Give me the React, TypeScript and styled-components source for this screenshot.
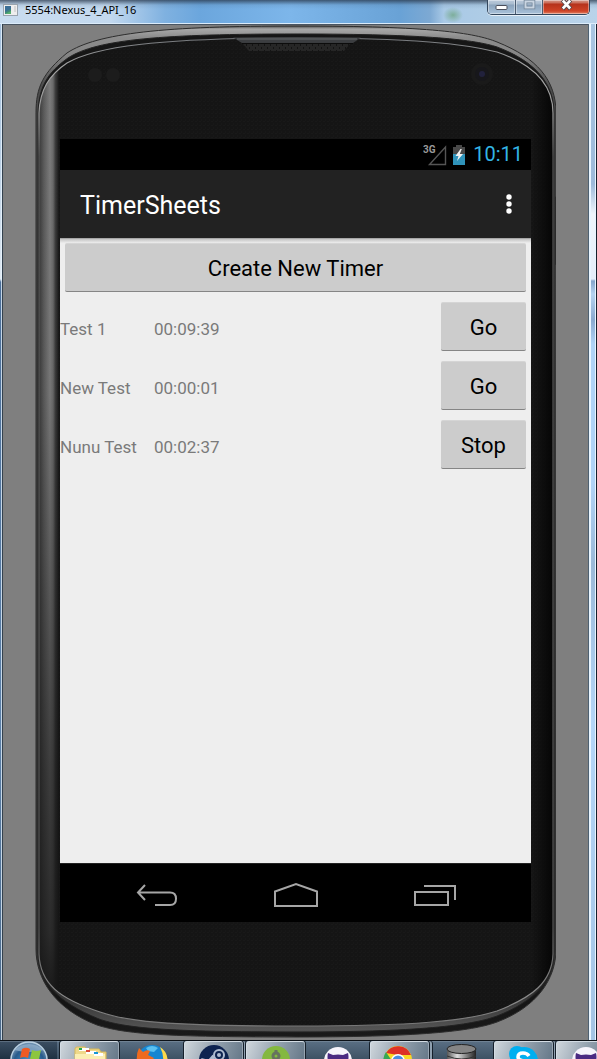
import React from "react";
import styled, { createGlobalStyle, css } from "styled-components";

const GlobalStyle = createGlobalStyle`
  *, *::before, *::after { box-sizing: border-box; }
  body { margin: 0; background: #7f7f7f; font-family: Roboto, "Noto Sans", sans-serif; }
  button { font: inherit; color: inherit; border: 0; padding: 0; margin: 0; cursor: pointer; }
`;

const Desktop = styled.div`
  display: flex;
  flex-direction: column;
  min-height: 100vh;
`;

const EmulatorWindow = styled.section`
  flex: 1;
  display: flex;
  flex-direction: column;
  background: #7f7f7f;
`;

const TitleBar = styled.header`
  display: flex;
  align-items: flex-start;
  height: 24px;
  padding: 0 7px 0 3px;
  border-bottom: 1px solid #dcecfa;
  background:
    linear-gradient(rgba(40, 55, 75, 0.75), rgba(60, 90, 120, 0.12) 5px, transparent 9px),
    radial-gradient(ellipse 10px 8px at 453px 15px, rgba(110, 165, 130, 0.75), transparent),
    linear-gradient(90deg, #c9dcef 0, #c3d9ef 110px, #7fb1e0 165px, #6ba6dd 200px, #7db6ea 290px, #69a2d6 400px, #7da9d3 430px, #a9c9e6 444px, #b3cfe6 520px, #b9d3ea 100%);
`;

const WindowIcon = styled.svg`
  width: 15px;
  height: 12px;
  margin-top: 4px;
`;

const WindowTitle = styled.h1`
  flex: 1;
  margin: 0 0 0 7px;
  color: #000;
  font: 400 11px/19px "Noto Sans", "Open Sans", sans-serif;
`;

const WindowControls = styled.div`
  display: flex;
  height: 15px;
  border: 1px solid #33465c;
  border-top: 0;
  border-radius: 0 0 5px 5px;
  overflow: hidden;
  box-shadow: 0 1px 0 rgba(255, 255, 255, 0.7);
`;

const WindowButton = styled.button<{ $close?: boolean }>`
  display: flex;
  justify-content: center;
  width: ${(p) => (p.$close ? 47 : 27)}px;
  height: 14px;
  border-left: 1px solid #4c5e73;
  box-shadow: inset 0 0 0 1px rgba(255, 255, 255, 0.4);
  background: ${(p) =>
    p.$close
      ? "linear-gradient(#d59a8c, #c96b58 3px, #b5321c 4px, #cf4326 11px, #e08468)"
      : "linear-gradient(#bccbdc, #a9bccf 4px, #8ba3bc 5px, #a9c2da)"};
  &:first-child { border-left: 0; }
`;

const WindowBody = styled.div`
  flex: 1;
  display: flex;
`;

const LeftEdge = styled.div`
  width: 3px;
  background:
    linear-gradient(90deg, transparent 1px, rgba(235, 246, 255, 0.75) 1px, rgba(235, 246, 255, 0.75) 2px, #33414e 2px),
    linear-gradient(#a3bfdc, #b4cbe2 120px, #dfe9f2 255px, #4c6f99 258px, #5c80a8 700px, #4a6888);
`;

const RightEdge = styled.div`
  width: 9px;
  background:
    linear-gradient(90deg, #4f6272 1px, transparent 1px, transparent 7px, #e8f4ff 7px, #e8f4ff 8px, #14202c 8px),
    linear-gradient(90deg, transparent 1px, #e9f5ff 1px, #e9f5ff 3px, transparent 3px),
    linear-gradient(#a9c6e2, #9dbada 160px, #eef5fb 190px, #e4eefa 255px, #85a6cc 257px, #b5d3f0 270px, #8aaad0 296px, #b0d3f6 320px, #b0d3f6 460px, #9bb9d8 540px, #b4d6f8 700px, #a4c4e4);
`;

const ClientArea = styled.main`
  flex: 1;
  display: flex;
  padding: 0 32px 2px;
  border-top: 1px solid #4a5663;
`;

const Phone = styled.div`
  position: relative;
  flex: 1;
  display: flex;
  flex-direction: column;
  padding: 114px 25px 116px;
`;

const PhoneShell = styled.svg`
  position: absolute;
  inset: 0;
  width: 100%;
  height: 100%;
`;

const Screen = styled.div`
  position: relative;
  flex: 1;
  display: flex;
  flex-direction: column;
  background: #eee;
`;

const StatusBar = styled.div`
  display: flex;
  align-items: center;
  justify-content: flex-end;
  height: 31px;
  padding-right: 8px;
  background: #000;
`;

const SignalIcon = styled.svg`
  width: 24px;
  height: 22px;
  margin-right: 5px;
`;

const BatteryIcon = styled.svg`
  width: 14px;
  height: 20px;
  margin-right: 7px;
`;

const Clock = styled.time`
  color: #33b5e5;
  font-size: 20px;
  line-height: 31px;
`;

const ActionBar = styled.header`
  display: flex;
  align-items: center;
  justify-content: space-between;
  height: 68px;
  padding: 0 12px 0 20px;
  background: #222;
`;

const AppTitle = styled.h2`
  margin: 0;
  padding-top: 4px;
  color: #fff;
  font-size: 25px;
  font-weight: 400;
  line-height: 32px;
`;

const OverflowButton = styled.button`
  display: flex;
  justify-content: center;
  width: 20px;
  background: none;
`;

const Content = styled.div`
  flex: 1;
  padding: 5px 5px 5px 0;
  background: linear-gradient(#8a8a8a, #c4c4c4 1px, #eee 5px);
`;

const HoloButton = styled.button<{ $wide?: boolean }>`
  display: block;
  height: 49px;
  padding-top: 2px;
  border-radius: 2px;
  border-top: 1px solid #d5d5d5;
  border-bottom: 1px solid #858585;
  background: #ccc;
  color: #000;
  font-size: 22px;
  line-height: 45px;
  text-align: center;
  ${(p) =>
    p.$wide
      ? css`
          width: calc(100% - 5px);
          margin: 0 0 5px 5px;
        `
      : css`
          width: 85px;
          margin: 5px 0;
        `}
`;

const TimerTable = styled.table`
  width: 100%;
  border-collapse: collapse;
  color: #7a7a7a;
  font-size: 17px;
  line-height: 20px;
`;

const NameCell = styled.th`
  width: 94px;
  padding: 4px 0 0;
  font-weight: 400;
  text-align: left;
  white-space: nowrap;
`;

const TimeCell = styled.td`
  padding: 4px 0 0;
`;

const ActionCell = styled.td`
  width: 85px;
  padding: 0;
`;

const NavBar = styled.nav`
  display: flex;
  align-items: center;
  height: 59px;
  padding: 4px 27px 0 28px;
  border-top: 1px solid #222;
  background: #000;
`;

const NavButton = styled.button`
  flex: 1;
  display: flex;
  justify-content: center;
  background: none;
`;

const Taskbar = styled.footer`
  display: flex;
  gap: 3px;
  height: 19px;
  overflow: hidden;
  border-top: 1px solid #0b1016;
  background: linear-gradient(#8797a6 0, #586d82 1px, #3e5264 100%);
`;

const StartButton = styled.button`
  flex: none;
  width: 57px;
  height: 38px;
  background: linear-gradient(#7d8d9c 0, #3a4d61 1px, #1f3142 18px);
`;

const TaskButton = styled.button<{ $raised?: boolean; $stacked?: boolean }>`
  flex: none;
  width: 59px;
  height: 38px;
  border-radius: 3px;
  background: transparent;
  ${(p) =>
    p.$raised &&
    css`
      border: 1px solid #d3dce4;
      border-right-color: #97a5b2;
      background: linear-gradient(110deg, #cfd6dc, #94a2af 45%, #5c6f80);
      box-shadow: 0 0 0 1px #16202b${p.$stacked ? ", 3px 0 0 #8fa0b0, 4px 0 0 #16202b" : ""};
    `}
`;

const TaskIcon = styled.svg`
  display: block;
  width: 36px;
  height: 32px;
  margin: 0 auto;
`;

const outer =
  "M1,88 C1,62 8,48 32,28 C62,8 130,1 262,1 C395,1 440,8 462,17 C502,33 521,55 521,88 V925 C521,955 502,983 462,998 C440,1006 395,1013 262,1013 C130,1013 90,1010 62,1001 C20,985 1,955 1,925 Z";
const middle =
  "M3,88 C4,62 12,48 33,33 C62,14 130,9 262,9 C395,9 440,15 462,22 C502,37 519,60 519,88 V928 C518,957 500,977 462,992 C440,1000 395,1008 262,1008 C130,1008 90,1004 64,995 C22,978 3,957 3,928 Z";
const inner =
  "M4,88 C5,65 14,50 32,38 C60,22 120,13 262,13 C380,13 430,19 462,27 C500,40 518,60 518,88 V930 C517,958 498,973 462,987 C430,997 380,1002 262,1002 C130,1002 90,997 65,988 C25,975 5,960 4,930 Z";

function Shell() {
  return (
    <PhoneShell viewBox="0 0 521 1014" preserveAspectRatio="none" aria-hidden="true">
      <defs>
        <linearGradient id="band" gradientUnits="userSpaceOnUse" x1="0" y1="0" x2="0" y2="1014">
          <stop offset="0" stopColor="#333" />
          <stop offset=".004" stopColor="#a8a8a8" />
          <stop offset=".012" stopColor="#8c8c8c" />
          <stop offset=".03" stopColor="#858585" />
          <stop offset=".06" stopColor="#4c4c4c" />
          <stop offset=".09" stopColor="#4a4a4a" />
          <stop offset=".92" stopColor="#333" />
          <stop offset=".96" stopColor="#151515" />
          <stop offset="1" stopColor="#1a1a1a" />
        </linearGradient>
        <linearGradient id="under" gradientUnits="userSpaceOnUse" x1="0" y1="0" x2="0" y2="1014">
          <stop offset="0" stopColor="#161616" />
          <stop offset=".93" stopColor="#1a1a1a" />
          <stop offset=".98" stopColor="#484848" />
          <stop offset=".992" stopColor="#555" />
          <stop offset="1" stopColor="#222" />
        </linearGradient>
        <linearGradient id="line" x1="0" y1="0" x2="0" y2="1">
          <stop offset="0" stopColor="#75787c" />
          <stop offset=".03" stopColor="#a5a5a5" />
          <stop offset=".08" stopColor="#999" />
          <stop offset=".12" stopColor="#555" />
          <stop offset=".9" stopColor="#555" />
          <stop offset=".97" stopColor="#8c8c8c" />
          <stop offset="1" stopColor="#777" />
        </linearGradient>
        <linearGradient id="side" gradientUnits="userSpaceOnUse" x1="4" y1="0" x2="24" y2="0">
          <stop offset="0" stopColor="#3a3a3a" />
          <stop offset=".25" stopColor="#5c5c5c" />
          <stop offset=".55" stopColor="#7c7c7c" />
          <stop offset=".7" stopColor="#6a6a6a" />
          <stop offset=".82" stopColor="#3c3c3c" />
          <stop offset="1" stopColor="#161616" />
        </linearGradient>
        <linearGradient id="fade" x1="0" y1="0" x2="0" y2="1">
          <stop offset="0" stopColor="#141414" stopOpacity="0" />
          <stop offset=".35" stopColor="#141414" stopOpacity="0.05" />
          <stop offset=".75" stopColor="#141414" stopOpacity=".6" />
          <stop offset=".92" stopColor="#141414" stopOpacity=".78" />
          <stop offset="1" stopColor="#151515" />
        </linearGradient>
        <linearGradient id="right" gradientUnits="userSpaceOnUse" x1="496" y1="0" x2="518" y2="0">
          <stop offset="0" stopColor="#070707" stopOpacity="0" />
          <stop offset="1" stopColor="#050505" />
        </linearGradient>
        <pattern id="grain" width="4" height="4" patternUnits="userSpaceOnUse">
          <rect width="4" height="4" fill="#151515" />
          <rect width="2" height="1" fill="#191919" />
          <rect x="2" y="2" width="1" height="2" fill="#181818" />
        </pattern>
        <pattern id="mesh" width="6" height="6" patternUnits="userSpaceOnUse">
          <rect width="6" height="6" fill="#262626" />
          <rect x="1" y="1" width="1" height="2" fill="#141414" />
          <rect x="4" y="4" width="1" height="2" fill="#141414" />
        </pattern>
        <clipPath id="face"><path d={inner} /></clipPath>
      </defs>
      <path d={outer} fill="url(#band)" stroke="#2c2c2c" strokeWidth="1" />
      <path d={middle} fill="url(#under)" stroke="#222" strokeWidth="1" />
      <g clipPath="url(#face)">
        <rect width="521" height="1014" fill="url(#grain)" />
        <rect x="4" y="38" width="20" height="946" fill="url(#side)" />
        <rect x="4" y="38" width="20" height="947" fill="url(#fade)" />
        <rect x="496" width="24" height="1014" fill="url(#right)" />
      </g>
      <path d={inner} fill="none" stroke="url(#line)" strokeWidth="1.2" />
      <path d="M203,13 H320 L309,26 H214 Z" fill="url(#mesh)" />
      <path d="M198,12.500 H326 L318,18 H207 Z" fill="#3c3e41" />
      <path d="M202,14 H322" stroke="#66696c" />
      <path d="M207,18.500 H318" stroke="#0c0c0c" />
      <circle cx="60" cy="50" r="7" fill="#1c1c1c" />
      <circle cx="78" cy="50" r="7" fill="#1c1c1c" />
      <circle cx="447" cy="49" r="11" fill="#1a1a1a" />
      <circle cx="447" cy="49" r="7" fill="#17171b" />
      <circle cx="447" cy="49" r="3" fill="#21213c" />
      <path d="M521.500,172 V240" stroke="#1c1c1c" strokeWidth="2" />
    </PhoneShell>
  );
}

const CatIcon = () => (
  <TaskIcon viewBox="0 0 36 32" aria-hidden="true">
    <circle cx="18" cy="17" r="14" fill="#f6f4fb" />
    <path d="M8 9 L13 11 Q18 10 23 11 L28 9 Q29 13 28 17 Q27 24 18 24 Q9 24 8 17 Q7 13 8 9Z" fill="#4a2a82" />
    <rect x="11" y="15" width="14" height="7" rx="3" fill="#e8c7b4" />
  </TaskIcon>
);

const timers = [
  { name: "Test 1", time: "00:09:39", action: "Go" },
  { name: "New Test", time: "00:00:01", action: "Go" },
  { name: "Nunu Test", time: "00:02:37", action: "Stop" },
];

export default function App() {
  return (
    <Desktop>
      <GlobalStyle />
      <EmulatorWindow>
        <TitleBar>
          <WindowIcon viewBox="0 0 15 12" aria-hidden="true">
            <rect x=".5" y=".5" width="14" height="11" fill="#eee" stroke="#9aa4ae" />
            <rect x="2" y="2" width="6" height="8" fill="#3f8a78" />
            <path d="M2 2h6v3L2 8z" fill="#3b6f96" />
            <path d="M2 10h6V7z" fill="#58b070" />
            <path d="M11 3h2M11 5h2M11 7h2" stroke="#c2c2c2" />
          </WindowIcon>
          <WindowTitle>5554:Nexus_4_API_16</WindowTitle>
          <WindowControls>
            <WindowButton aria-label="Minimize">
              <svg width="13" height="14" aria-hidden="true">
                <rect x="1" y="5.500" width="11" height="4" rx="1" fill="#fff" stroke="#4b4f5c" />
              </svg>
            </WindowButton>
            <WindowButton aria-label="Maximize">
              <svg width="13" height="14" aria-hidden="true">
                <rect x="2.500" y="1.500" width="8" height="6" fill="none" stroke="#6f8296" strokeWidth="3.500" />
                <rect x="2.500" y="1.500" width="8" height="6" fill="none" stroke="#c9d5e2" strokeWidth="2" />
              </svg>
            </WindowButton>
            <WindowButton $close aria-label="Close">
              <svg width="15" height="14" aria-hidden="true">
                <path d="M3.500 0 L11.500 9 M11.500 0 L3.500 9" stroke="#55474d" strokeWidth="4.500" />
                <path d="M3.800 .5 L11.200 8.500 M11.200 .5 L3.800 8.500" stroke="#fff" strokeWidth="2.600" />
              </svg>
            </WindowButton>
          </WindowControls>
        </TitleBar>
        <WindowBody>
          <LeftEdge />
          <ClientArea>
            <Phone>
              <Shell />
              <Screen>
                <StatusBar>
                  <SignalIcon viewBox="0 0 24 22" role="img" aria-label="3G signal">
                    <path d="M6.500 20.500 H22.500 V3 Z" fill="none" stroke="#555" strokeWidth="1.400" />
                    <text x="0" y="9" fill="#999" fontSize="10" fontWeight="700" fontFamily="Roboto, sans-serif">3G</text>
                  </SignalIcon>
                  <BatteryIcon viewBox="0 0 14 20" role="img" aria-label="Battery charging">
                    <path d="M4 0h6v2h3v8H1V2h3z" fill="#484848" />
                    <rect x="1" y="9" width="12" height="11" fill="#2f93ba" />
                    <path d="M8.500 4 3.500 11h3L5 16l6-7H7.800l2-5z" fill="#f2f2f2" />
                  </BatteryIcon>
                  <Clock>10:11</Clock>
                </StatusBar>
                <ActionBar>
                  <AppTitle>TimerSheets</AppTitle>
                  <OverflowButton aria-label="More options">
                    <svg width="8" height="22" aria-hidden="true">
                      <circle cx="4" cy="4" r="2.700" fill="#fff" />
                      <circle cx="4" cy="11" r="2.700" fill="#fff" />
                      <circle cx="4" cy="18" r="2.700" fill="#fff" />
                    </svg>
                  </OverflowButton>
                </ActionBar>
                <Content>
                  <HoloButton $wide>Create New Timer</HoloButton>
                  <TimerTable>
                    <tbody>
                      {timers.map((t) => (
                        <tr key={t.name}>
                          <NameCell scope="row">{t.name}</NameCell>
                          <TimeCell>{t.time}</TimeCell>
                          <ActionCell><HoloButton>{t.action}</HoloButton></ActionCell>
                        </tr>
                      ))}
                    </tbody>
                  </TimerTable>
                </Content>
                <NavBar aria-label="System">
                  <NavButton aria-label="Back">
                    <svg width="42" height="24" fill="none" stroke="#a6a6a6" strokeWidth="2" aria-hidden="true">
                      <path d="M9 2 2 9.500 9 17 M2 9.500 H34 Q40 9.500 40 15.700 Q40 22 34 22 H19" />
                    </svg>
                  </NavButton>
                  <NavButton aria-label="Home">
                    <svg width="46" height="26" fill="none" stroke="#a6a6a6" strokeWidth="2" aria-hidden="true">
                      <path d="M2 24 V9.500 L23 2 44 9.500 V24 Z" />
                    </svg>
                  </NavButton>
                  <NavButton aria-label="Recent apps">
                    <svg width="44" height="24" fill="none" stroke="#a6a6a6" strokeWidth="2" aria-hidden="true">
                      <path d="M2 9 H35 V22 H2 Z M11 3 H42 V17" />
                    </svg>
                  </NavButton>
                </NavBar>
              </Screen>
            </Phone>
          </ClientArea>
          <RightEdge />
        </WindowBody>
      </EmulatorWindow>
      <Taskbar>
        <StartButton aria-label="Start">
          <svg width="54" height="38" aria-hidden="true">
            <defs>
              <radialGradient id="orb" cx=".5" cy=".6" r=".6">
                <stop offset="0" stopColor="#4aa0d8" />
                <stop offset=".7" stopColor="#285b8c" />
                <stop offset="1" stopColor="#7f9db8" />
              </radialGradient>
            </defs>
            <circle cx="27" cy="19" r="18" fill="url(#orb)" stroke="#b9cfe0" strokeWidth="1.500" />
            <path d="M12 9 Q27 -3 42 9 Q27 13 12 9Z" fill="#9cb8d0" opacity=".7" />
            <path d="M20 8 q4 -2.500 8 0 l-2 9 q-4 -2 -8 0z" fill="#ee5a24" />
            <path d="M30 9 q5 2 9 0 l-2 9 q-5 2 -9 0z" fill="#8dc63f" />
          </svg>
        </StartButton>
        <TaskButton $raised aria-label="Explorer">
          <TaskIcon viewBox="0 0 36 32" aria-hidden="true">
            <path d="M3 5 q0-2 2-2 h8 l2 2 h12 l2 3 h5 v22 H3z" fill="#eed88a" stroke="#d7b95b" />
            <path d="M3 10h30v20H3z" fill="#fbeeb2" />
            <path d="M7 4h10v3H7zM14 7h10v3H14zM22 9h9v3H22z" fill="#fff" />
            <path d="M7 4h3v2H7z" fill="#25a84a" />
            <path d="M14 6h4v2h-4z" fill="#d94a35" />
            <path d="M22 8h4v2h-4z" fill="#1697d5" />
          </TaskIcon>
        </TaskButton>
        <TaskButton aria-label="Firefox">
          <TaskIcon viewBox="0 0 36 32" aria-hidden="true">
            <circle cx="18" cy="16" r="15" fill="#1786d1" />
            <path d="M12 4 Q18 0 24 4 L20 8 14 7Z" fill="#5bc0f0" />
            <path d="M26 3 Q36 9 33 24 L27 28 Q32 14 26 3Z" fill="#ffd94a" />
            <path d="M5 4 L9 8 Q13 5 16 7 L14 11 20 14 Q18 17 14 17 Q17 24 26 22 L20 31 Q6 30 3 18 Q2 10 5 4Z" fill="#ee6a1e" />
          </TaskIcon>
        </TaskButton>
        <TaskButton $raised $stacked aria-label="Steam">
          <TaskIcon viewBox="0 0 36 32" aria-hidden="true">
            <circle cx="18" cy="16" r="15" fill="#0e2350" />
            <circle cx="23" cy="11" r="5" fill="none" stroke="#aebbd0" strokeWidth="2" />
            <circle cx="23" cy="11" r="2" fill="#aebbd0" />
            <path d="M18 12 L13 18 5 16" stroke="#aebbd0" strokeWidth="4" fill="none" />
          </TaskIcon>
        </TaskButton>
        <TaskButton $raised aria-label="Android tools">
          <TaskIcon viewBox="0 0 36 32" aria-hidden="true">
            <circle cx="18" cy="16" r="14" fill="#84b840" />
            <circle cx="18" cy="12" r="3" fill="none" stroke="#66725f" strokeWidth="3" />
            <path d="M18 9V6 M13 20l3-5 M23 20l-3-5" stroke="#66725f" strokeWidth="3" />
          </TaskIcon>
        </TaskButton>
        <TaskButton aria-label="GitHub"><CatIcon /></TaskButton>
        <TaskButton $raised $stacked aria-label="Chrome">
          <TaskIcon viewBox="0 0 36 32" aria-hidden="true">
            <circle cx="16" cy="16" r="14" fill="#f9d923" />
            <path d="M4 9 A14 14 0 0 1 29 11 L16 11Z" fill="#dd3127" />
            <path d="M4 8 A14 14 0 0 0 15 30 L10 17Z" fill="#35a853" />
            <circle cx="16" cy="17" r="7" fill="#fff" />
            <circle cx="16" cy="17" r="5.500" fill="#4a8ee0" />
          </TaskIcon>
        </TaskButton>
        <TaskButton aria-label="Database">
          <TaskIcon viewBox="0 0 36 32" aria-hidden="true">
            <defs>
              <linearGradient id="metal">
                <stop offset="0" stopColor="#555" />
                <stop offset=".35" stopColor="#ddd" />
                <stop offset="1" stopColor="#222" />
              </linearGradient>
            </defs>
            <path d="M3 5v25h29V5z" fill="url(#metal)" />
            <ellipse cx="17.500" cy="5" rx="14.500" ry="4.500" fill="#858585" stroke="#222" />
            <path d="M3 12 Q18 18 32 12" fill="none" stroke="#333" />
          </TaskIcon>
        </TaskButton>
        <TaskButton $raised $stacked aria-label="Skype">
          <TaskIcon viewBox="0 0 36 32" aria-hidden="true">
            <circle cx="18" cy="17" r="14" fill="#00aff0" />
            <circle cx="11" cy="10" r="8" fill="#00aff0" />
            <path d="M23 12 Q21 9 17 9 Q12 9 12 13 Q12 16 18 17 Q24 18 23 22 Q21 25 17 25 Q13 25 11 21" fill="none" stroke="#fff" strokeWidth="3.500" />
          </TaskIcon>
        </TaskButton>
        <TaskButton $raised aria-label="GitHub repository"><CatIcon /></TaskButton>
      </Taskbar>
    </Desktop>
  );
}
